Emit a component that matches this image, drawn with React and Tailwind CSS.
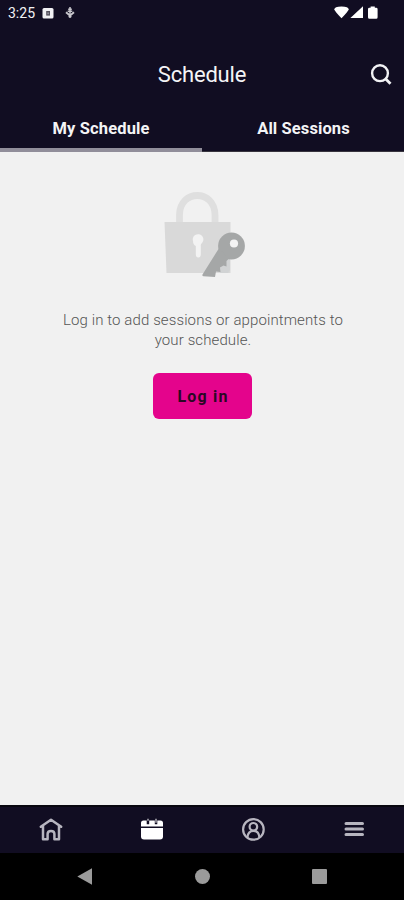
function StatusBar() {
  return (
    <div className="flex h-[26px] items-center pl-2 pr-[25px] text-[#f1f1f4]">
      <span className="w-[34px] text-[14px] leading-[26px]">3:25</span>
      <svg className="h-[11px] w-[12px]" viewBox="0 0 12 11">
        <rect x="0.500" width="11" height="10.500" rx="1.500" fill="#f1f1f4" />
        <rect x="4.200" y="3" width="3.800" height="4.600" fill="#55525e" />
        <rect x="5.500" y="4.400" width="1.200" height="1.800" fill="#a8a7ae" />
      </svg>
      <svg className="ml-[11px] h-[14px] w-[10px]" viewBox="0 0 10 14" fill="none" stroke="#c9c8ce">
        <path d="M5 1v11M3.200 3.200h3.600M2.700 5.200h4.600M3.500 10.500h3" strokeWidth="1.500" />
        <path d="M1 6.300 5 9.600 9 6.300" strokeWidth="1.900" />
      </svg>
      <svg className="ml-auto h-[14px] w-[45px]" viewBox="0 0 45 14" fill="#fff">
        <path d="M0.300 3.400Q0.300 .5 7.500 .5T14.700 3.400Q14 5.200 7.500 12.300Q1 5.200 .3 3.400Z" />
        <path d="M16.400 12 29 0.200v11.800Z" />
        <path d="M36.600 .5h4.200v1.300h1.400q1.400 0 1.400 1.400v8q0 1.500-1.400 1.500h-6.800q-1.400 0-1.400-1.500V3.200q0-1.400 1.400-1.400h1.200Z" />
      </svg>
    </div>
  );
}

function Header() {
  return (
    <header className="bg-[#110d22] text-[#f4f4f6]">
      <StatusBar />
      <div className="grid h-[79px] grid-cols-[1fr_auto_1fr] items-center pt-[18px]">
        <span />
        <h1 className="pt-px text-[22px] leading-[26px] tracking-[-0.200px]">Schedule</h1>
        <button aria-label="Search" className="mr-[12px] justify-self-end">
          <svg className="block h-[22px] w-[22px]" viewBox="0 0 22 22" fill="none" stroke="#f1f1f4" strokeWidth="2.400">
            <circle cx="10" cy="9.200" r="7.900" />
            <path d="m15.500 14.800 5 5" strokeWidth="2.800" />
          </svg>
        </button>
      </div>
      <nav className="grid h-[47px] grid-cols-2 text-center text-[16.500px] font-bold leading-[47px]">
        <button className="h-[47px] border-b-4 border-[#918e9a] tracking-[0.150px]">My Schedule</button>
        <button className="h-[47px] border-b border-[#38353f] pl-px tracking-[0.100px]">All Sessions</button>
      </nav>
    </header>
  );
}

function LockArt() {
  return (
    <svg className="ml-px block h-[88px] w-[84px]" viewBox="0 0 84 88">
      <path d="M18.500 31V24C18.500 -2 54 -2 54 24v7" fill="none" stroke="#dfdfdf" strokeWidth="6.800" />
      <path d="M3.500 31h66v51H5.500Z" fill="#d9d9d9" />
      <path d="M32 50a5.300 5.300 0 1 1 9 2q-1.500 1.200-1.200 2.500v8.500q0 3.500-2.500 3.500t-2.500-3.500V55Q32 53.500 32 50Z" fill="#f3f3f3" />
      <path d="m60 70 6-4 3 2v11l-2 3H59Z" fill="#d1d3d4" />
      <g fill="#a5a7a7">
        <circle cx="70.500" cy="55" r="13.400" />
        <path d="M57.500 58 41.500 83.500q-.5 1.500 1 1.700l11.500.8 1-5.500 4.500.5-.5-4.500 3.500-2 3 1V70l3-3Z" />
      </g>
      <circle cx="73" cy="52.500" r="4.100" fill="#f3f3f3" />
    </svg>
  );
}

function TabBar() {
  return (
    <nav className="grid h-[48px] grid-cols-4 items-center justify-items-center border-t-2 border-[#08070f] bg-[#110d22] text-[#b7b5bf]">
      <button aria-label="Home">
        <svg className="block h-6 w-6" viewBox="0 0 24 24" fill="none" stroke="currentColor" strokeWidth="2.500" strokeLinejoin="round" strokeLinecap="round">
          <path d="M1.800 8.800 12 1.700l10.200 7.100M4 8v13.200h4.600v-5.200c0-4 6.800-4 6.800 0v5.200h4.600V8" />
        </svg>
      </button>
      <button aria-label="Schedule">
        <svg className="ml-px block h-6 w-6 text-white" viewBox="0 0 24 24" fill="currentColor">
          <path d="M3.500 2.500h3.200v3.700h2.500V2.500h5.600v3.700h2.500V2.500h3.200q2.500 0 2.500 2.500V8.500H1V5Q1 2.500 3.500 2.500Z" />
          <path d="M1 10h22V18.500q0 3-3 3H4q-3 0-3-3Z" />
          <path d="M7.500 .8h1v2h-1ZM15.500 .8h1v4h-1Z" />
        </svg>
      </button>
      <button aria-label="Profile">
        <svg className="block h-6 w-6" viewBox="0 0 24 24" fill="none" stroke="currentColor" strokeWidth="2.200">
          <circle cx="12.400" cy="11.400" r="10.300" />
          <circle cx="12.400" cy="8.800" r="3.800" />
          <path d="M6.400 19.500q.5-6.700 6-6.700t6 6.700" />
        </svg>
      </button>
      <button aria-label="Menu">
        <svg className="block h-6 w-6" viewBox="0 0 24 24" fill="none" stroke="currentColor" strokeWidth="3" strokeLinecap="round">
          <path d="M4 5.500h16.500M4 11h16.500M4 16.500h16.500" />
        </svg>
      </button>
    </nav>
  );
}

function SystemBar() {
  return (
    <div className="flex h-[47px] items-center justify-between bg-black pl-[77px] pr-[77px]">
      <svg className="block h-[17px] w-[15px]" viewBox="0 0 15 17"><path d="M0.300 8.500 15 0.300v16.400Z" fill="#9b9b9b" /></svg>
      <div className="size-[15px] rounded-full bg-[#9b9b9b]" />
      <div className="size-[15px] rounded-[1px] bg-[#9b9b9b]" />
    </div>
  );
}

export default function App() {
  return (
    <div className="flex h-[900px] w-[404px] flex-col overflow-hidden bg-[#f1f1f1] font-['Roboto',sans-serif]">
      <Header />
      <main className="flex flex-1 flex-col items-center pt-[39px]">
        <LockArt />
        <p className="mt-[31px] pl-[2px] text-center text-[15px] font-light leading-[20px] tracking-[0.110px] text-[#555]">
          Log in to add sessions or appointments to
          <br />
          your schedule.
        </p>
        <button className="mt-[23px] h-[46px] w-[99px] rounded-[6px] bg-[#e4048c] pl-[2px] pt-px text-[16px] font-bold tracking-[1.200px] text-[#2a0824]">
          Log in
        </button>
      </main>
      <TabBar />
      <SystemBar />
    </div>
  );
}
